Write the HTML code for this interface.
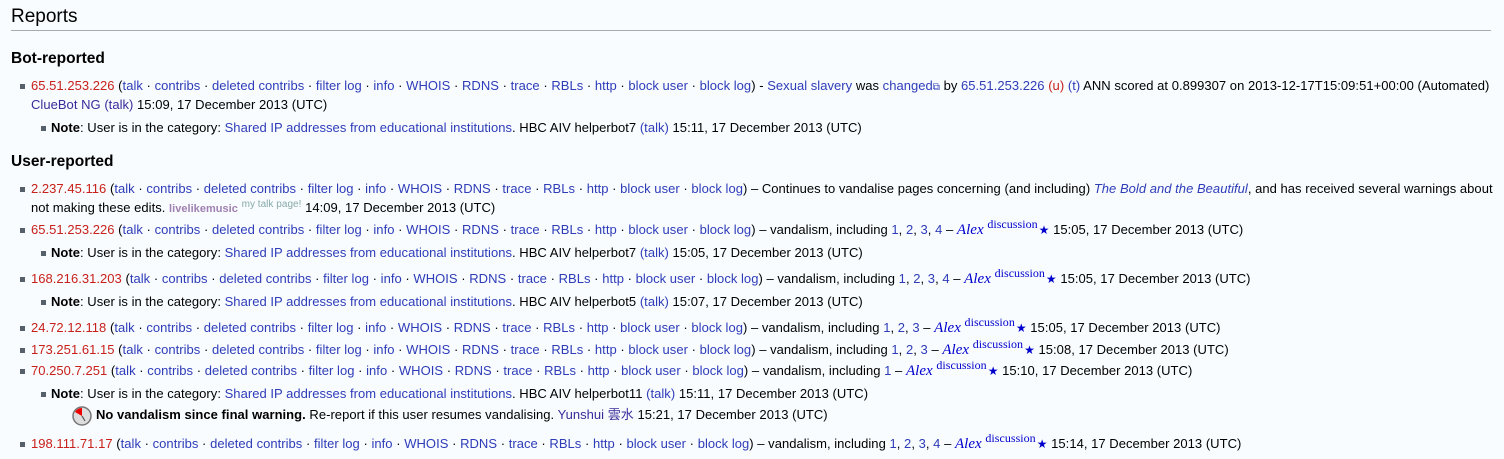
<!DOCTYPE html>
<html><head><meta charset="utf-8"><style>
body{margin:0;width:1504px;height:459px;background:#f8fcff;font-family:"Liberation Sans",Arial,sans-serif;font-size:13px;color:#000;position:relative;overflow:hidden}
.l{position:absolute;white-space:nowrap;line-height:18px;letter-spacing:0.03px}
a{color:#2e3cb8;text-decoration:none}
.v{color:#3a2a9a}
.r{color:#c8201a}
.b1{position:absolute;width:5px;height:5px;background:#55606a}
h2{position:absolute;left:11px;top:5px;margin:0;font-weight:normal;font-size:19px;line-height:24px}
.rule{position:absolute;left:11px;top:30px;width:1480px;height:1px;background:#aaa}
h3{position:absolute;left:11px;margin:0;font-size:15.5px;font-weight:bold;line-height:20px}
.alex{font-family:"Liberation Serif",serif;font-style:italic;font-size:15px;color:#0000cc}
.disc{font-family:"Liberation Serif",serif;font-size:12px;color:#0000cc;position:relative;top:-6px}
.st{color:#0000cc;font-size:12px;margin-left:1px}
</style></head><body>
<h2>Reports</h2><div class="rule"></div>
<h3 style="top:49px">Bot-reported</h3>
<div class="b1" style="left:20px;top:84px"></div>
<div class="l" style="left:31px;top:77px"><a class="r">65.51.253.226</a> (<a>talk</a> · <a>contribs</a> · <a>deleted contribs</a> · <a>filter log</a> · <a>info</a> · <a>WHOIS</a> · <a>RDNS</a> · <a>trace</a> · <a>RBLs</a> · <a>http</a> · <a>block user</a> · <a>block log</a>) - <a>Sexual slavery</a> was <a>changed</a><span style="color:#2e3cb8;font-size:10px">⧉</span> by <a>65.51.253.226</a> <a class="r">(u)</a> <a>(t)</a> ANN scored at 0.899307 on 2013-12-17T15:09:51+00:00 (Automated)</div>
<div class="l" style="left:31px;top:96px"><a class="v">ClueBot NG</a> <a class="v">(talk)</a> 15:09, 17 December 2013 (UTC)</div>
<div class="b1" style="left:41px;top:126px"></div>
<div class="l" style="left:51px;top:119px"><b>Note</b>: User is in the category: <a>Shared IP addresses from educational institutions</a>. HBC AIV helperbot7 <a>(talk)</a> 15:11, 17 December 2013 (UTC)</div>
<h3 style="top:152px">User-reported</h3>

<div class="b1" style="left:20px;top:187px"></div>
<div class="l" style="left:31px;top:180px"><a class="r">2.237.45.116</a> (<a>talk</a> · <a>contribs</a> · <a>deleted contribs</a> · <a>filter log</a> · <a>info</a> · <a>WHOIS</a> · <a>RDNS</a> · <a>trace</a> · <a>RBLs</a> · <a>http</a> · <a>block user</a> · <a>block log</a>) – Continues to vandalise pages concerning (and including) <a><i>The Bold and the Beautiful</i></a>, and has received several warnings about</div>
<div class="l" style="left:31px;top:199px">not making these edits. <b style="color:#a080b0;font-size:11px">livelikemusic</b> <span style="color:#8aa;font-size:10px;position:relative;top:-5px">my talk page!</span> 14:09, 17 December 2013 (UTC)</div>

<div class="b1" style="left:20px;top:228px"></div>
<div class="l" style="left:31px;top:221px"><a class="r">65.51.253.226</a> (<a>talk</a> · <a>contribs</a> · <a>deleted contribs</a> · <a>filter log</a> · <a>info</a> · <a>WHOIS</a> · <a>RDNS</a> · <a>trace</a> · <a>RBLs</a> · <a>http</a> · <a>block user</a> · <a>block log</a>) – vandalism, including <a>1</a>, <a>2</a>, <a>3</a>, <a>4</a> – <span class="alex">Alex</span> <span class="disc">discussion</span><span class="st">★</span> 15:05, 17 December 2013 (UTC)</div>
<div class="b1" style="left:41px;top:251px"></div>
<div class="l" style="left:51px;top:244px"><b>Note</b>: User is in the category: <a>Shared IP addresses from educational institutions</a>. HBC AIV helperbot7 <a>(talk)</a> 15:05, 17 December 2013 (UTC)</div>

<div class="b1" style="left:20px;top:277px"></div>
<div class="l" style="left:31px;top:270px"><a class="r">168.216.31.203</a> (<a>talk</a> · <a>contribs</a> · <a>deleted contribs</a> · <a>filter log</a> · <a>info</a> · <a>WHOIS</a> · <a>RDNS</a> · <a>trace</a> · <a>RBLs</a> · <a>http</a> · <a>block user</a> · <a>block log</a>) – vandalism, including <a>1</a>, <a>2</a>, <a>3</a>, <a>4</a> – <span class="alex">Alex</span> <span class="disc">discussion</span><span class="st">★</span> 15:05, 17 December 2013 (UTC)</div>
<div class="b1" style="left:41px;top:300px"></div>
<div class="l" style="left:51px;top:293px"><b>Note</b>: User is in the category: <a>Shared IP addresses from educational institutions</a>. HBC AIV helperbot5 <a>(talk)</a> 15:07, 17 December 2013 (UTC)</div>

<div class="b1" style="left:20px;top:326px"></div>
<div class="l" style="left:31px;top:319px"><a class="r">24.72.12.118</a> (<a>talk</a> · <a>contribs</a> · <a>deleted contribs</a> · <a>filter log</a> · <a>info</a> · <a>WHOIS</a> · <a>RDNS</a> · <a>trace</a> · <a>RBLs</a> · <a>http</a> · <a>block user</a> · <a>block log</a>) – vandalism, including <a>1</a>, <a>2</a>, <a>3</a> – <span class="alex">Alex</span> <span class="disc">discussion</span><span class="st">★</span> 15:05, 17 December 2013 (UTC)</div>
<div class="b1" style="left:20px;top:348px"></div>
<div class="l" style="left:31px;top:341px"><a class="r">173.251.61.15</a> (<a>talk</a> · <a>contribs</a> · <a>deleted contribs</a> · <a>filter log</a> · <a>info</a> · <a>WHOIS</a> · <a>RDNS</a> · <a>trace</a> · <a>RBLs</a> · <a>http</a> · <a>block user</a> · <a>block log</a>) – vandalism, including <a>1</a>, <a>2</a>, <a>3</a> – <span class="alex">Alex</span> <span class="disc">discussion</span><span class="st">★</span> 15:08, 17 December 2013 (UTC)</div>
<div class="b1" style="left:20px;top:369px"></div>
<div class="l" style="left:31px;top:362px"><a class="r">70.250.7.251</a> (<a>talk</a> · <a>contribs</a> · <a>deleted contribs</a> · <a>filter log</a> · <a>info</a> · <a>WHOIS</a> · <a>RDNS</a> · <a>trace</a> · <a>RBLs</a> · <a>http</a> · <a>block user</a> · <a>block log</a>) – vandalism, including <a>1</a> – <span class="alex">Alex</span> <span class="disc">discussion</span><span class="st">★</span> 15:10, 17 December 2013 (UTC)</div>
<div class="b1" style="left:41px;top:392px"></div>
<div class="l" style="left:51px;top:385px"><b>Note</b>: User is in the category: <a>Shared IP addresses from educational institutions</a>. HBC AIV helperbot11 <a>(talk)</a> 15:11, 17 December 2013 (UTC)</div>
<svg style="position:absolute;left:72px;top:406px" width="20" height="20" viewBox="0 0 20 20"><circle cx="10" cy="10" r="9" fill="#ddd" stroke="#777" stroke-width="1.5"/><path d="M10 10 L10 2 A8 8 0 0 0 3 6 Z" fill="#e00"/><path d="M10 10 L13 15" stroke="#555" stroke-width="1.2"/></svg>
<div class="l" style="left:96px;top:406px"><b>No vandalism since final warning.</b> Re-report if this user resumes vandalising. <a class="v">Yunshui</a> <a class="v" style='font-family:"Liberation Sans","Noto Sans CJK SC",sans-serif'>雲水</a> 15:21, 17 December 2013 (UTC)</div>

<div class="b1" style="left:20px;top:442px"></div>
<div class="l" style="left:31px;top:435px"><a class="r">198.111.71.17</a> (<a>talk</a> · <a>contribs</a> · <a>deleted contribs</a> · <a>filter log</a> · <a>info</a> · <a>WHOIS</a> · <a>RDNS</a> · <a>trace</a> · <a>RBLs</a> · <a>http</a> · <a>block user</a> · <a>block log</a>) – vandalism, including <a>1</a>, <a>2</a>, <a>3</a>, <a>4</a> – <span class="alex">Alex</span> <span class="disc">discussion</span><span class="st">★</span> 15:14, 17 December 2013 (UTC)</div>
</body></html>
